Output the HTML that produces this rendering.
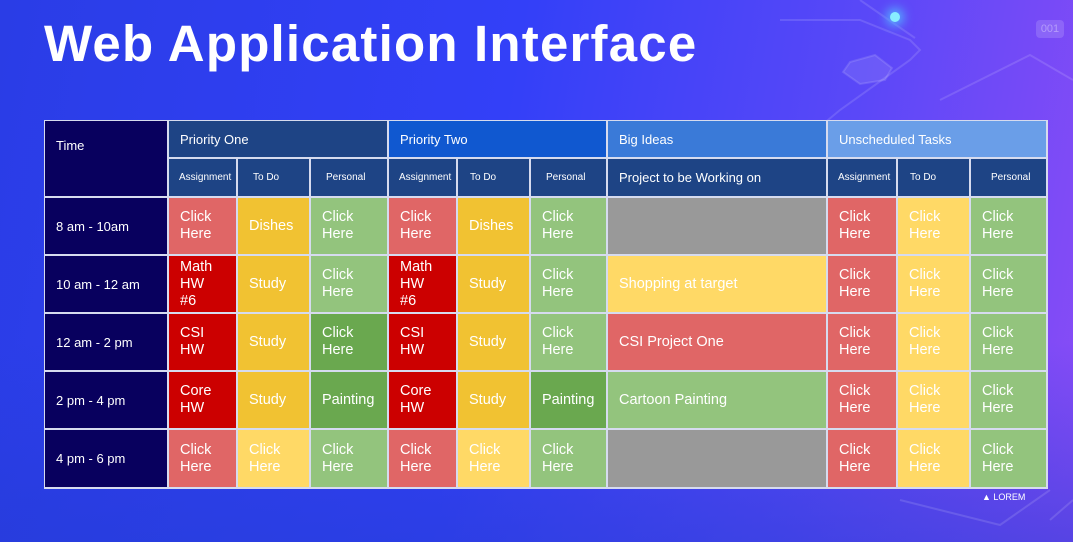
<!DOCTYPE html>
<html><head><meta charset="utf-8"><style>
*{margin:0;padding:0;box-sizing:border-box}
body{width:1073px;height:542px;overflow:hidden;position:relative;font-family:"Liberation Sans",sans-serif;
background:linear-gradient(100deg,#2a3de6 0%,#3340f8 45%,#5a48f8 75%,#8a4cf6 100%);}
.bot{position:absolute;left:0;right:0;bottom:0;height:200px;background:linear-gradient(180deg,rgba(30,50,200,0),rgba(35,60,210,.5));}
h1{position:absolute;left:44px;top:14px;font-size:51px;font-weight:bold;color:#fff;letter-spacing:1.2px}
.g{position:absolute;left:44px;top:120px;width:1004px;height:369px;background:#d6dbef;padding:1px;display:grid;gap:2px;
grid-template-columns:122px 67px 71px 76px 67px 71px 75px 218px 68px 71px 75px;
grid-template-rows:36px 37px 56px 56px 56px 56px 57px}
.c{display:flex;align-items:center;padding-left:11px;color:#fff;font-size:14.5px;line-height:17px}
.s{font-size:10px;padding-left:10px}
.h{font-size:13px}
.t{background:#08005e;font-size:13px}
.r{background:#e06666}.R{background:#cc0000}.y{background:#f1c232}.Y{background:#ffd966}
.gn{background:#93c47d}.G{background:#6aa84f}.gr{background:#999}
.p1{background:#1e4485}.p2{background:#1058d0}.bi{background:#3a7ad8}.un{background:#6a9ee8}
.lorem{position:absolute;left:982px;top:492px;color:#fff;font-size:9px}
</style></head><body>
<div class="bot"></div>
<svg width="1073" height="542" style="position:absolute;left:0;top:0" fill="none" stroke="rgba(255,255,255,0.13)" stroke-width="2">
<path d="M780 20 L860 20 L910 40 L920 50 L910 60 L840 110 L780 160"/>
<path d="M860 0 L915 38"/>
<path d="M940 100 L1030 55 L1073 80"/>
<path d="M1050 490 L1000 525 L900 500"/>
<path d="M1073 500 L1050 520"/>
<polygon points="850,62 875,55 892,68 885,80 860,84 843,72" fill="rgba(255,255,255,0.1)"/>
</svg>
<div style="position:absolute;left:890px;top:12px;width:10px;height:10px;border-radius:50%;background:#8ef;box-shadow:0 0 10px 4px #5af"></div>
<div style="position:absolute;left:1036px;top:20px;width:28px;height:18px;border-radius:4px;background:rgba(255,255,255,0.15);color:rgba(255,255,255,0.35);font-size:11px;text-align:center;line-height:18px">001</div>
<h1>Web Application Interface</h1>
<div class="g">
<div class="c t" style="grid-row:1/3;align-items:flex-start;padding-top:16px">Time</div>
<div class="c h p1" style="grid-column:2/5">Priority One</div>
<div class="c h p2" style="grid-column:5/8">Priority Two</div>
<div class="c h bi">Big Ideas</div>
<div class="c h un" style="grid-column:9/12">Unscheduled Tasks</div>
<div class="c s p1">Assignment</div><div class="c s p1" style="padding-left:15px">To Do</div><div class="c s p1" style="padding-left:15px">Personal</div>
<div class="c s p1">Assignment</div><div class="c s p1" style="padding-left:12px">To Do</div><div class="c s p1" style="padding-left:15px">Personal</div>
<div class="c p1" style="font-size:13px">Project to be Working on</div>
<div class="c s p1">Assignment</div><div class="c s p1" style="padding-left:12px">To Do</div><div class="c s p1" style="padding-left:20px">Personal</div>

<div class="c t">8 am - 10am</div>
<div class="c r">Click<br>Here</div><div class="c y">Dishes</div><div class="c gn">Click<br>Here</div>
<div class="c r">Click<br>Here</div><div class="c y">Dishes</div><div class="c gn">Click<br>Here</div>
<div class="c gr"></div>
<div class="c r">Click<br>Here</div><div class="c Y">Click<br>Here</div><div class="c gn">Click<br>Here</div>

<div class="c t">10 am - 12 am</div>
<div class="c R">Math<br>HW<br>#6</div><div class="c y">Study</div><div class="c gn">Click<br>Here</div>
<div class="c R">Math<br>HW<br>#6</div><div class="c y">Study</div><div class="c gn">Click<br>Here</div>
<div class="c Y">Shopping at target</div>
<div class="c r">Click<br>Here</div><div class="c Y">Click<br>Here</div><div class="c gn">Click<br>Here</div>

<div class="c t">12 am - 2 pm</div>
<div class="c R">CSI<br>HW</div><div class="c y">Study</div><div class="c G">Click<br>Here</div>
<div class="c R">CSI<br>HW</div><div class="c y">Study</div><div class="c gn">Click<br>Here</div>
<div class="c r">CSI Project One</div>
<div class="c r">Click<br>Here</div><div class="c Y">Click<br>Here</div><div class="c gn">Click<br>Here</div>

<div class="c t">2 pm - 4 pm</div>
<div class="c R">Core<br>HW</div><div class="c y">Study</div><div class="c G">Painting</div>
<div class="c R">Core<br>HW</div><div class="c y">Study</div><div class="c G">Painting</div>
<div class="c gn">Cartoon Painting</div>
<div class="c r">Click<br>Here</div><div class="c Y">Click<br>Here</div><div class="c gn">Click<br>Here</div>

<div class="c t">4 pm - 6 pm</div>
<div class="c r">Click<br>Here</div><div class="c Y">Click<br>Here</div><div class="c gn">Click<br>Here</div>
<div class="c r">Click<br>Here</div><div class="c Y">Click<br>Here</div><div class="c gn">Click<br>Here</div>
<div class="c gr"></div>
<div class="c r">Click<br>Here</div><div class="c Y">Click<br>Here</div><div class="c gn">Click<br>Here</div>
</div>
<div class="lorem">▲ LOREM</div>
</body></html>
